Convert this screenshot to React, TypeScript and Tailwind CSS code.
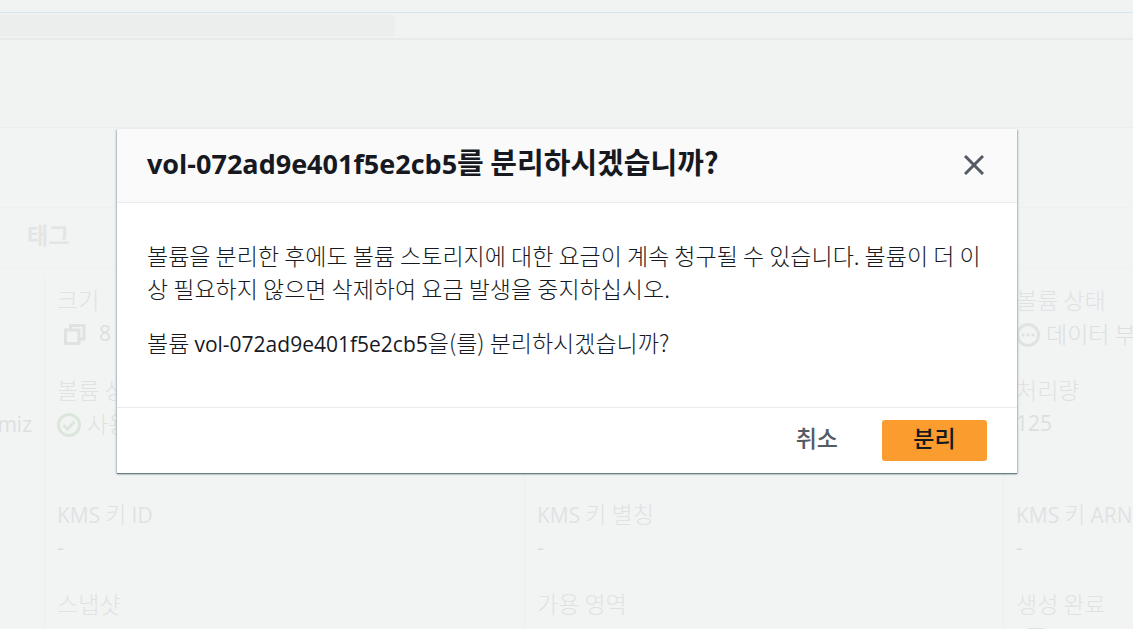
import type { ReactNode } from "react";

const VOLUME_ID = "vol-072ad9e401f5e2cb5";

function Latin({ children }: { children: ReactNode }) {
  return (
    <span className="font-['Open_Sans','Noto_Sans',sans-serif] text-[21px] leading-none font-normal">
      {children}
    </span>
  );
}

function Field({ label, children }: { label: ReactNode; children?: ReactNode }) {
  return (
    <div className="h-[90px]">
      <dt className="h-[34px] whitespace-nowrap font-light text-[#dfe2e3]">{label}</dt>
      <dd className="flex h-[34px] items-center whitespace-nowrap text-[#dcdfe0]">{children}</dd>
    </div>
  );
}

function CopyIcon() {
  return (
    <svg viewBox="0 0 24 24" className="mt-1 mr-3 ml-[6px] size-6 shrink-0 fill-none stroke-[#dfe1e2] stroke-[3]" aria-hidden="true">
      <path d="M2.500 7h13.500v13.500H2.500z" />
      <path d="M7.500 6V2.500h13.500v13.500H17" />
    </svg>
  );
}

function CheckIcon() {
  return (
    <svg viewBox="0 0 24 24" className="mt-1 mr-[6px] size-6 shrink-0 fill-none stroke-[#dce6dc] stroke-[3]" aria-hidden="true">
      <circle cx="12" cy="12" r="10.500" />
      <path d="m6.500 12 4 4 7-7.500" />
    </svg>
  );
}

function PendingIcon() {
  return (
    <svg viewBox="0 0 24 24" className="mt-1 mr-[6px] size-6 shrink-0 fill-none stroke-[#e0e2e3] stroke-[3]" aria-hidden="true">
      <circle cx="12" cy="12" r="10.500" />
      <path d="M5.500 12h3M10.500 12h3M15.500 12h3" />
    </svg>
  );
}

function Background() {
  return (
    <main className="min-h-screen overflow-hidden bg-[#f1f3f3]">
      <div className="h-[13px] border-b border-[#d5e5ee]" />
      <div className="h-[27px] border-b-2 border-[#e8eaea] pt-[2px]">
        <div className="h-[21px] w-[395px] bg-[#eceeed]" />
      </div>
      <div className="h-[87px]" />
      <section className="border-t border-[#eceeee] bg-[#f2f4f4]">
        <div className="h-20 border-b border-[#eff1f1]" />
        <h2 className="h-[60px] border-b border-[#eff1f1] pt-[9px] pl-[27px] text-[23px] leading-[34px] font-bold text-[#e3e5e5]">
          태그
        </h2>
        <div className="mt-[7px] grid grid-cols-[44px_480px_479px_480px] pb-2 text-[23px] leading-[34px]">
          <div className="flex flex-col items-end pt-[139px] pr-3 text-[#dcdfe0]">
            <Latin>miz</Latin>
          </div>
          <dl className="border-l border-[#eceeef] pt-[7px] pl-3">
            <Field label="크기"><CopyIcon /><Latin>8</Latin></Field>
            <Field label="볼륨 상태"><CheckIcon /><span className="font-light text-[#dce3dc]">사용 중</span></Field>
            <div className="h-[34px]" />
            <Field label={<><Latin>KMS</Latin> 키 <Latin>ID</Latin></>}><Latin>-</Latin></Field>
            <Field label="스냅샷" />
          </dl>
          <dl className="border-l border-[#eceeef] pt-[7px] pl-3">
            <div className="h-[214px]" />
            <Field label={<><Latin>KMS</Latin> 키 별칭</>}><Latin>-</Latin></Field>
            <Field label="가용 영역" />
          </dl>
          <dl className="border-l border-[#eceeef] pt-[7px] pl-3">
            <Field label="볼륨 상태"><PendingIcon /><span className="font-light">데이터 부족</span></Field>
            <Field label="처리량"><Latin>125</Latin></Field>
            <div className="h-[34px]" />
            <Field label={<><Latin>KMS</Latin> 키 <Latin>ARN</Latin></>}><Latin>-</Latin></Field>
            <Field label="생성 완료"><CopyIcon /></Field>
          </dl>
        </div>
      </section>
    </main>
  );
}

export default function App() {
  return (
    <div className="relative h-screen overflow-hidden font-['Noto_Sans_CJK_KR',sans-serif]">
      <Background />
      <div className="absolute inset-0 flex items-start justify-center pt-[129px] pr-4 pl-[17px]">
        <div
          role="dialog"
          aria-modal="true"
          aria-labelledby="detach-title"
          className="w-full max-w-[900px] bg-white text-[#16191f] shadow-[0_1px_1px_0_#687f84,1px_1px_2px_0_#b8c3c7,-1px_1px_2px_0_#b8c3c7]"
        >
          <header className="flex h-[74px] items-center justify-between border-b border-[#e9ebec] bg-[#fafafa] px-[30px] pb-[6px]">
            <h1 id="detach-title" className="pb-1 text-[29px] leading-9 font-bold">
              <span className="font-['Open_Sans','Noto_Sans',sans-serif] text-[27px] leading-none">{VOLUME_ID}</span>를 분리하시겠습니까?
            </h1>
            <button type="button" aria-label="닫기" className="mt-1 cursor-pointer p-[3px] text-[#545b64]">
              <svg viewBox="0 0 20 20" className="size-5 fill-none stroke-current stroke-[3]" aria-hidden="true">
                <path d="m1 1 18 18M19 1 1 19" />
              </svg>
            </button>
          </header>
          <div className="px-[30px] pt-9 pb-12 text-[23px] leading-[33px] font-light break-all">
            <p>
              볼륨을 분리한 후에도 볼륨 스토리지에 대한 요금이 계속 청구될 수 있습니다. 볼륨이 더 이상 필요하지 않으면 삭제하여 요금 발생을 중지하십시오.
            </p>
            <p className="mt-[21px]">
              볼륨 <Latin>{VOLUME_ID}</Latin>을(를) 분리하시겠습니까?
            </p>
          </div>
          <footer className="flex h-[66px] items-center justify-end gap-3 border-t border-[#e9ebec] px-[30px] text-[23px] leading-7 font-medium">
            <button type="button" className="h-[41px] cursor-pointer px-8 pb-2 text-[#545b64]">취소</button>
            <button type="button" className="h-[41px] w-[105px] cursor-pointer rounded-[3px] bg-[#fb9c2e] pb-2 text-[#16191f]">분리</button>
          </footer>
        </div>
      </div>
    </div>
  );
}
